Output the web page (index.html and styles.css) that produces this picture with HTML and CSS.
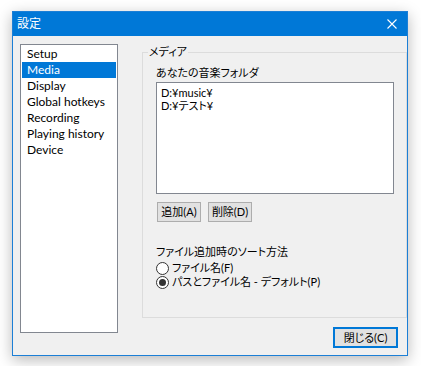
FILE: index.html
```html
<!DOCTYPE html>
<html lang="ja">
<head>
<meta charset="utf-8">
<title>設定</title>
<link rel="stylesheet" href="styles.css">
</head>
<body>
<div class="window">
  <div class="titlebar">
    <span class="title">設定</span>
    <svg class="close-x" width="10" height="10" viewBox="0 0 10 10"><path d="M0.5 0.5 L9.5 9.5 M9.5 0.5 L0.5 9.5" stroke="#fff" stroke-width="1.1" fill="none"/></svg>
  </div>
  <div class="body">
    <ul class="nav">
      <li>Setup</li>
      <li class="sel">Media</li>
      <li>Display</li>
      <li>Global hotkeys</li>
      <li>Recording</li>
      <li>Playing history</li>
      <li>Device</li>
    </ul>
    <div class="main">
      <div class="group">
        <span class="legend">メディア</span>
        <div class="label">あなたの音楽フォルダ</div>
        <ul class="folders">
          <li>D:¥music¥</li>
          <li>D:¥テスト¥</li>
        </ul>
        <div class="btns">
          <button class="btn">追加(A)</button>
          <button class="btn">削除(D)</button>
        </div>
        <div class="label sort">ファイル追加時のソート方法</div>
        <div class="radio first"><span class="circle"></span>ファイル名(F)</div>
        <div class="radio"><span class="circle on"></span>パスとファイル名 - デフォルト(P)</div>
      </div>
      <div class="footer">
        <button class="btn close">閉じる(C)</button>
      </div>
    </div>
  </div>
</div>
</body>
</html>
```

FILE: styles.css
```css
* { box-sizing: border-box; }
html, body { margin: 0; padding: 0; background: #fff; }
body {
  font-family: "Lato", "Noto Sans CJK JP", sans-serif;
  font-size: 11px;
  font-feature-settings: "palt" 1;
  color: #000;
  padding: 11px 0 0 12px;
  height: 366px;
  overflow: hidden;
}
.window {
  width: 396px;
  height: 345px;
  border: 1px solid #1c7fd6;
  background: #f0f0f0;
  box-shadow: 0 4px 14px rgba(0,0,0,0.28);
  display: flex;
  flex-direction: column;
  overflow: hidden;
}
.titlebar {
  height: 24px;
  background: #0078d7;
  color: #fff;
  display: flex;
  align-items: center;
  padding: 0 0 0 4px;
  flex: none;
}
.title { flex: 1; font-size: 12px; line-height: 16px; }
.close-x { margin-right: 10px; }
.body {
  flex: 1;
  display: flex;
  padding: 8px 0 0 7px;
}
.nav {
  list-style: none;
  margin: 0;
  padding: 1px;
  width: 98px;
  height: 289px;
  background: #fff;
  border: 1px solid #828790;
  flex: none;
  font-size: 12px;
}
.nav li {
  height: 16px;
  line-height: 16px;
  padding-left: 5px;
  white-space: nowrap;
}
.nav li.sel { background: #0078d7; color: #fff; }
.main {
  margin-left: 24px;
  width: 265px;
  display: flex;
  flex-direction: column;
}
.group {
  position: relative;
  margin-top: 8px;
  height: 266px;
  border: 1px solid #dcdcdc;
  padding: 12px 0 0 13px;
}
.legend {
  position: absolute;
  top: -9px;
  left: 5px;
  padding: 0 1px;
  background: #f0f0f0;
  line-height: 16px;
}
.label { line-height: 16px; height: 16px; }
.folders {
  list-style: none;
  margin: 1px 0 0;
  padding: 3px 4px;
  width: 238px;
  height: 112px;
  background: #fff;
  border: 1px solid #828790;
}
.folders li { line-height: 13px; height: 13px; }
.btns { display: flex; gap: 7px; margin-top: 8px; padding-left: 1px; }
.btn {
  font-family: inherit;
  font-size: 11px;
  font-feature-settings: "palt" 1;
  color: #000;
  background: #e1e1e1;
  border: 1px solid #adadad;
  width: 44px;
  height: 20px;
  padding: 0;
  line-height: 16px;
  margin: 0;
}
.sort { margin-top: 22px; }
.radio {
  display: flex;
  align-items: center;
  height: 14px;
  line-height: 14px;
  white-space: nowrap;
}
.radio.first { margin-top: 1px; }
.circle {
  width: 13px;
  height: 13px;
  border-radius: 50%;
  border: 1px solid #333;
  background: #fff;
  margin-right: 3px;
  display: flex;
  align-items: center;
  justify-content: center;
  flex: none;
}
.circle.on::after {
  content: "";
  width: 7px;
  height: 7px;
  border-radius: 50%;
  background: #333;
}
.footer {
  display: flex;
  justify-content: flex-end;
  margin-top: 9px;
  padding-right: 9px;
}
.btn.close {
  width: 65px;
  height: 21px;
  border: 2px solid #0078d7;
}
```
